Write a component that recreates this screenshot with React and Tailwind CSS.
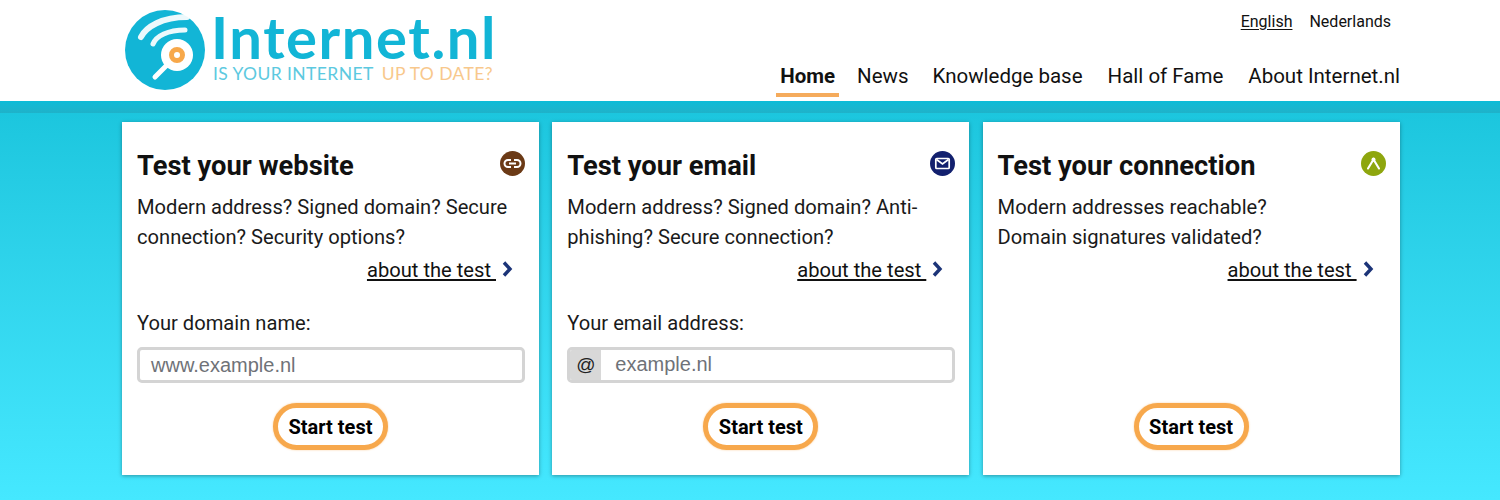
import React from 'react'

const roboto = { fontFamily: 'Roboto, sans-serif' }

function Logo() {
  return (
    <div className="flex items-start">
      <svg width="82" height="82" viewBox="0 0 82 82" className="mt-[9px] shrink-0">
        <circle cx="41" cy="41" r="40" fill="#12b5d6" />
        <path d="M17 28 C22 18 38 8 63 8" fill="none" stroke="#fff" strokeWidth="6" strokeLinecap="round" opacity="0.92" />
        <path d="M29 35 C32 27 44 21 61 21" fill="none" stroke="#fff" strokeWidth="5" strokeLinecap="round" opacity="0.92" />
        <path d="M31 68 L43 56" stroke="#fff" strokeWidth="5" strokeLinecap="round" />
        <circle cx="53" cy="46" r="16" fill="#fff" />
        <circle cx="53" cy="46" r="5.5" fill="#fff" stroke="#f7a84a" strokeWidth="5" />
      </svg>
      <div className="ml-[7px] flex flex-col">
        <div className="mt-[9px] -ml-[2px] text-[58px] leading-[56px] font-bold text-[#12b5d6] font-['Lato',sans-serif] tracking-[1.55px]">Internet.nl</div>
        <div className="-mt-[1px] flex text-[17.5px] leading-[20px] font-['Lato',sans-serif] tracking-[0.4px]">
          <span className="text-[#5cc9e0]">IS YOUR INTERNET</span>
          <span className="ml-[8px] text-[#f8c88c]">UP TO DATE?</span>
        </div>
      </div>
    </div>
  )
}

function Header() {
  const links = ['News', 'Knowledge base', 'Hall of Fame', 'About Internet.nl']
  return (
    <div className="h-[101px] bg-white flex justify-between pl-[124px] pr-[100px]">
      <Logo />
      <div className="flex flex-col items-end text-[#111]" style={roboto}>
        <div className="mt-[12px] mr-[9px] flex gap-[17px] text-[16px] leading-[20px]">
          <span className="underline underline-offset-2">English</span>
          <span>Nederlands</span>
        </div>
        <div className="mt-[31px] flex text-[20.5px] leading-[26px]">
          <div className="mr-[18px] px-[4px] border-b-[4px] border-[#f5ab5c] h-[34px] font-bold">Home</div>
          <div className="flex gap-[25px]">
            {links.map((l) => (
              <div key={l} className="first:-mr-[1px]">{l}</div>
            ))}
          </div>
        </div>
      </div>
    </div>
  )
}

function Chevron() {
  return (
    <svg width="12" height="16" viewBox="0 0 12 16" className="ml-[5px] mb-[3px]">
      <path d="M3 1.5 L9 8 L3 14.5" fill="none" stroke="#1c3478" strokeWidth="3.4" />
    </svg>
  )
}

function LinkIcon() {
  return (
    <svg width="25" height="25" viewBox="0 0 25 25">
      <circle cx="12.5" cy="12.5" r="12.5" fill="#6b3a16" />
      <path d="M11 9 H8 A3.5 3.5 0 0 0 8 16 H11" fill="none" stroke="#fff" strokeWidth="2" />
      <path d="M14 9 H17 A3.5 3.5 0 0 1 17 16 H14" fill="none" stroke="#fff" strokeWidth="2" />
      <path d="M9 12.5 H16" fill="none" stroke="#fff" strokeWidth="2" />
    </svg>
  )
}

function MailIcon() {
  return (
    <svg width="25" height="25" viewBox="0 0 25 25">
      <circle cx="12.5" cy="12.5" r="12.5" fill="#12206e" />
      <rect x="5.8" y="7.5" width="13.4" height="10" rx="1" fill="none" stroke="#fff" strokeWidth="1.7" />
      <path d="M6.5 8.5 L12.5 13 L18.5 8.5" fill="none" stroke="#fff" strokeWidth="1.7" />
    </svg>
  )
}

function NodeIcon() {
  return (
    <svg width="25" height="25" viewBox="0 0 25 25">
      <circle cx="12.5" cy="12.5" r="12.5" fill="#8ea60e" />
      <path d="M7 17.5 L12.5 8.5 L18 17.5" fill="none" stroke="#fff" strokeWidth="2.1" strokeLinecap="round" />
      <circle cx="12.5" cy="8.5" r="2" fill="#fff" />
    </svg>
  )
}

function Card({ title, icon, lines, label, field }) {
  return (
    <div className="w-[417px] h-[353px] bg-white shadow-[0_1px_4px_rgba(0,0,0,0.35)] px-[15px] flex flex-col" style={roboto}>
      <div className="mt-[26px] flex items-center justify-between h-[34px]">
        <h2 className="pt-[2px] text-[27.3px] font-bold text-[#111] leading-[34px]">{title}</h2>
        <div className="-mt-[4px] mr-[-1px]">{icon}</div>
      </div>
      <p className="mt-[10px] text-[20.15px] leading-[30px] text-[#1a1a1a] h-[60px]">{lines}</p>
      <div className="mt-[5px] pr-[11px] flex justify-end items-center text-[20.15px] leading-[26px] text-[#111]">
        <span className="underline whitespace-pre">about the test </span>
        <Chevron />
      </div>
      <div className="h-[100px] mt-[27px]">
        {label && <div className="text-[20.15px] leading-[26px] text-[#1a1a1a]">{label}</div>}
        {field}
      </div>
      <button className="-mt-[7px] self-center w-[115px] h-[47px] rounded-full border-[5px] border-[#f7a84c] bg-white text-[20px] font-bold text-black shadow-[0_0_2px_rgba(247,168,76,0.6)]">Start test</button>
    </div>
  )
}

function DomainField() {
  return (
    <div className="mt-[11px] -mr-[1px] pb-[1px] h-[36px] rounded-[5px] border-[3px] border-[#d4d4d4] flex items-center pl-[11px] text-[20px] text-[#6f7278] font-['Liberation_Sans',sans-serif]">www.example.nl</div>
  )
}

function EmailField() {
  return (
    <div className="mt-[11px] -mr-[1px] h-[36px] rounded-[5px] border-[3px] border-[#d4d4d4] flex items-center overflow-hidden text-[20px] text-[#6f7278] font-['Liberation_Sans',sans-serif]">
      <div className="w-[31px] h-full bg-[#d8d8d8] flex items-center justify-center text-[#222] text-[19px] shrink-0">@</div>
      <span className="ml-[14px] pb-[2px]">example.nl</span>
    </div>
  )
}

export default function App() {
  return (
    <div className="w-[1500px] h-[500px] overflow-hidden flex flex-col">
      <Header />
      <div className="h-[399px] bg-gradient-to-b from-[#1ac5dd] to-[#45e8ff]">
        <div className="h-[12px] bg-gradient-to-b from-[#0bbcd8] to-[#1fb2c9]" />
        <div className="mt-[9px] ml-[122px] flex gap-[13.3px]">
          <Card title="Test your website" icon={<LinkIcon />} lines="Modern address? Signed domain? Secure connection? Security options?" label="Your domain name:" field={<DomainField />} />
          <Card title="Test your email" icon={<MailIcon />} lines="Modern address? Signed domain? Anti-phishing? Secure connection?" label="Your email address:" field={<EmailField />} />
          <Card title="Test your connection" icon={<NodeIcon />} lines={<>Modern addresses reachable?<br />Domain signatures validated?</>} />
        </div>
      </div>
    </div>
  )
}
